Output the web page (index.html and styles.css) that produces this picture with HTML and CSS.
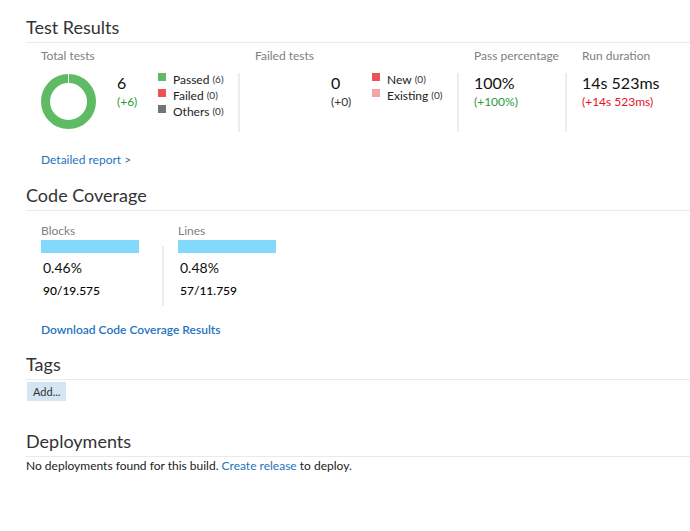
FILE: index.html
```html
<!DOCTYPE html>
<html>
<head>
<meta charset="utf-8">
<link rel="stylesheet" href="styles.css">
</head>
<body>
<div class="page">
  <section class="sec sec-tests">
    <h2 class="sec-title">Test Results</h2>
    <div class="metrics">
      <div class="metric m-total">
        <div class="m-label">Total tests</div>
        <div class="m-body">
          <div class="chart">
            <svg width="55" height="55" viewBox="0 0 55 55">
              <circle cx="27.5" cy="27.5" r="23" fill="none" stroke="#5fbb63" stroke-width="9"/>
              <rect x="27" y="0" width="1" height="10" fill="#fff"/>
            </svg>
          </div>
          <div class="num">
            <div class="num-main">6</div>
            <div class="num-delta green">(+6)</div>
          </div>
          <ul class="legend">
            <li><span class="sq sq-pass"></span>Passed <small>(6)</small></li>
            <li><span class="sq sq-fail"></span>Failed <small>(0)</small></li>
            <li><span class="sq sq-other"></span>Others <small>(0)</small></li>
          </ul>
        </div>
      </div>
      <div class="metric m-failed sep">
        <div class="m-label">Failed tests</div>
        <div class="m-body">
          <div class="chart"></div>
          <div class="num">
            <div class="num-main">0</div>
            <div class="num-delta grey">(+0)</div>
          </div>
          <ul class="legend">
            <li><span class="sq sq-fail"></span>New <small>(0)</small></li>
            <li><span class="sq sq-exist"></span>Existing <small>(0)</small></li>
          </ul>
        </div>
      </div>
      <div class="metric m-pass sep">
        <div class="m-label">Pass percentage</div>
        <div class="m-body">
          <div class="num">
            <div class="num-main">100%</div>
            <div class="num-delta green">(+100%)</div>
          </div>
        </div>
      </div>
      <div class="metric m-dur sep">
        <div class="m-label">Run duration</div>
        <div class="m-body">
          <div class="num">
            <div class="num-main">14s 523ms</div>
            <div class="num-delta red">(+14s 523ms)</div>
          </div>
        </div>
      </div>
    </div>
    <a class="link detail-link" href="#">Detailed report &gt;</a>
  </section>

  <section class="sec sec-cov">
    <h2 class="sec-title">Code Coverage</h2>
    <div class="cov">
      <div class="cov-col">
        <div class="m-label">Blocks</div>
        <div class="cov-bar"></div>
        <div class="cov-body">
          <div class="cov-pct">0.46%</div>
          <div class="cov-frac">90/19.575</div>
        </div>
      </div>
      <div class="cov-col sep">
        <div class="m-label">Lines</div>
        <div class="cov-bar"></div>
        <div class="cov-body">
          <div class="cov-pct">0.48%</div>
          <div class="cov-frac">57/11.759</div>
        </div>
      </div>
    </div>
    <a class="link dl-link" href="#">Download Code Coverage Results</a>
  </section>

  <section class="sec sec-tags">
    <h2 class="sec-title">Tags</h2>
    <button class="add-btn">Add...</button>
  </section>

  <section class="sec sec-dep">
    <h2 class="sec-title">Deployments</h2>
    <p class="dep-text">No deployments found for this build. <a class="link plain" href="#">Create release</a> to deploy.</p>
  </section>
</div>
</body>
</html>
```

FILE: styles.css
```css
* { box-sizing: border-box; }
html, body { margin: 0; padding: 0; background: #fff; }
body {
  font-family: "Segoe UI", Lato, "Open Sans", sans-serif;
  font-size: 12px;
  color: #222;
}
.page { padding: 15px 0 0 26px; }

.sec-title {
  margin: 0;
  font-weight: 400;
  font-size: 18px;
  line-height: 24px;
  color: #333;
  padding-bottom: 3px;
  border-bottom: 1px solid #eaeaea;
}

.metrics { display: flex; padding-left: 15px; margin-top: 5px; }
.metric { display: flex; flex-direction: column; }
.m-total { width: 198px; }
.m-failed { width: 219px; }
.m-pass { width: 108px; }
.m-dur { width: 110px; }
.metric.sep { padding-left: 16px; }
.m-label { color: #808080; font-size: 12px; line-height: 16px; }
.m-body { display: flex; margin-top: 9px; height: 59px; }
.metric.sep .m-body { margin-left: -17px; padding-left: 15px; border-left: 2px solid #ededed; }

.chart { width: 55px; height: 55px; margin-right: 21px; margin-top: 1px; }
.chart svg { display: block; }
.num { width: 41px; }
.num-main { font-size: 16px; line-height: 20px; color: #111; white-space: nowrap; }
.num-delta { font-size: 12px; line-height: 18px; white-space: nowrap; }
.green { color: #2a9b3a; }
.grey { color: #333; }
.red { color: #e81123; }

.legend { list-style: none; margin: -2px 0 0; padding: 0; }
.legend li { display: flex; align-items: center; height: 16px; font-size: 12px; color: #222; white-space: nowrap; }
.legend small { font-size: 10px; margin-left: 3px; color: #333; }
.sq { width: 8px; height: 8px; margin-right: 7px; margin-top: -4px; }
.sq-pass { background: #5fbb63; }
.sq-fail { background: #ee5155; }
.sq-other { background: #737373; }
.sq-exist { background: #f4a6a7; }

.link { color: #1e73c0; text-decoration: none; }
.detail-link { display: inline-block; margin: 20px 0 0 15px; line-height: 16px; }

.sec-cov { margin-top: 15px; }
.cov { display: flex; padding-left: 15px; margin-top: 12px; }
.cov-col { width: 121px; }
.cov-col.sep { padding-left: 16px; }
.cov-bar { width: 98px; height: 13px; background: #83d9fb; margin-top: 1px; }
.cov-body { margin-top: -7px; padding: 12px 0 0 2px; height: 60px; }
.cov-col.sep .cov-body { margin-left: -16px; padding-left: 16px; border-left: 2px solid #ededed; }
.cov-pct { font-size: 14px; line-height: 20px; color: #111; }
.cov-frac { font-size: 12px; line-height: 20px; color: #000; font-weight: 500; margin-top: 3px; }
.dl-link { display: inline-block; margin: 16px 0 0 15px; font-weight: 600; line-height: 16px; }

.sec-tags { margin-top: 14px; }
.add-btn {
  display: block;
  margin: 2px 0 0 1px;
  font: inherit;
  font-size: 11px;
  color: #333;
  background: #d6e5f2;
  border: 0;
  padding: 0 6px;
  height: 19px;
  line-height: 19px;
}

.sec-dep { margin-top: 28px; }
.dep-text { margin: 1px 0 0; line-height: 16px; font-size: 12px; color: #222; }
.plain { color: #1e73c0; }
```
